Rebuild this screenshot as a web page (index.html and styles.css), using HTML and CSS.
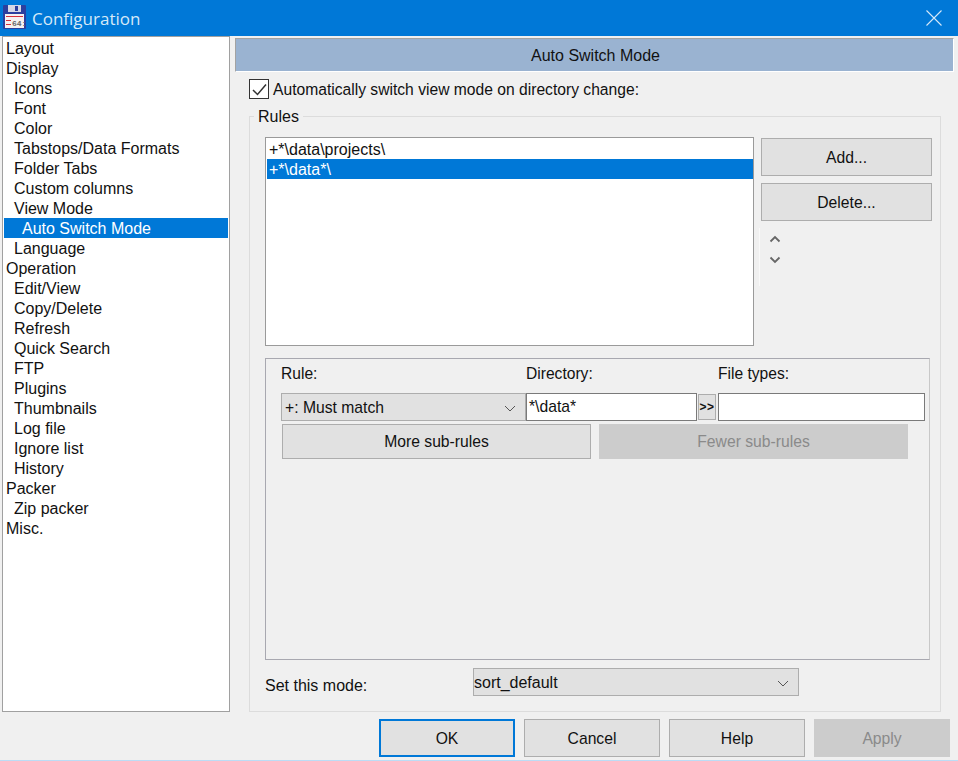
FILE: index.html
```html
<!DOCTYPE html>
<html lang="en">
<head>
<meta charset="utf-8">
<title>Configuration</title>
<link rel="stylesheet" href="styles.css">
</head>
<body>
<div class="dialog">
  <header class="titlebar">
    <svg class="app-icon" width="23" height="24" viewBox="0 0 23 24">
      <rect x="0" y="0" width="23" height="24" rx="1" fill="#2c3f9e"/>
      <rect x="5" y="0" width="13" height="7" fill="#d5d8e6"/>
      <rect x="12" y="1" width="3" height="5" fill="#2c3f9e"/>
      <rect x="2" y="9" width="19" height="14" fill="#f6f1f1"/>
      <rect x="3" y="11" width="17" height="1" fill="#d8313a"/>
      <rect x="3" y="15" width="5" height="1" fill="#d8313a"/>
      <rect x="3" y="19" width="5" height="1" fill="#d8313a"/>
      <text class="icon-text" x="9" y="21">64:</text>
    </svg>
    <span class="title">Configuration</span>
    <svg class="close" width="16" height="16" viewBox="0 0 16 16"><path d="M0.5 0.5L15.5 15.5M15.5 0.5L0.5 15.5" stroke="#d6e9f8" stroke-width="1.1" fill="none"/></svg>
  </header>
  <div class="body">
    <nav class="tree">
      <div class="node">Layout</div>
      <div class="node">Display</div>
      <div class="node l1">Icons</div>
      <div class="node l1">Font</div>
      <div class="node l1">Color</div>
      <div class="node l1">Tabstops/Data Formats</div>
      <div class="node l1">Folder Tabs</div>
      <div class="node l1">Custom columns</div>
      <div class="node l1">View Mode</div>
      <div class="node l2 selected">Auto Switch Mode</div>
      <div class="node l1">Language</div>
      <div class="node">Operation</div>
      <div class="node l1">Edit/View</div>
      <div class="node l1">Copy/Delete</div>
      <div class="node l1">Refresh</div>
      <div class="node l1">Quick Search</div>
      <div class="node l1">FTP</div>
      <div class="node l1">Plugins</div>
      <div class="node l1">Thumbnails</div>
      <div class="node l1">Log file</div>
      <div class="node l1">Ignore list</div>
      <div class="node l1">History</div>
      <div class="node">Packer</div>
      <div class="node l1">Zip packer</div>
      <div class="node">Misc.</div>
    </nav>
    <main class="panel">
      <div class="panel-head">Auto Switch Mode</div>
      <label class="auto-row">
        <span class="check"><svg width="15" height="13" viewBox="0 0 15 13"><path d="M1 7L5.5 11.5L14 1.5" stroke="#333" stroke-width="1.5" fill="none"/></svg></span>
        <span class="auto-text">Automatically switch view mode on directory change:</span>
      </label>
      <section class="rules">
        <span class="legend">Rules</span>
        <div class="rules-top">
          <div class="listbox">
            <div class="item">+*\data\projects\</div>
            <div class="item selected">+*\data*\</div>
          </div>
          <div class="side">
            <div class="btn side-btn">Add...</div>
            <div class="btn side-btn">Delete...</div>
            <div class="updown">
              <svg width="12" height="8" viewBox="0 0 12 8"><path d="M1.5 6.5L6 2L10.5 6.5" stroke="#666" stroke-width="1.8" fill="none"/></svg>
              <svg width="12" height="8" viewBox="0 0 12 8"><path d="M1.5 1.5L6 6L10.5 1.5" stroke="#666" stroke-width="1.8" fill="none"/></svg>
            </div>
          </div>
        </div>
        <div class="subbox">
          <div class="labels">
            <span class="lab-rule">Rule:</span>
            <span class="lab-dir">Directory:</span>
            <span>File types:</span>
          </div>
          <div class="inputs">
            <div class="combo rule-combo"><span>+: Must match</span><svg width="12" height="7" viewBox="0 0 12 7"><path d="M1 1L6 6L11 1" stroke="#555" stroke-width="1" fill="none"/></svg></div>
            <div class="field dir-field">*\data*</div>
            <div class="btn more">&gt;&gt;</div>
            <div class="field types-field"></div>
          </div>
          <div class="subrule-btns">
            <div class="btn sub-btn">More sub-rules</div>
            <div class="btn sub-btn disabled">Fewer sub-rules</div>
          </div>
        </div>
        <div class="mode-row">
          <span class="mode-label">Set this mode:</span>
          <div class="combo mode-combo"><span>sort_default</span><svg width="12" height="7" viewBox="0 0 12 7"><path d="M1 1L6 6L11 1" stroke="#555" stroke-width="1" fill="none"/></svg></div>
        </div>
      </section>
    </main>
  </div>
  <footer class="footer">
    <div class="btn foot-btn default">OK</div>
    <div class="btn foot-btn">Cancel</div>
    <div class="btn foot-btn">Help</div>
    <div class="btn foot-btn disabled">Apply</div>
  </footer>
</div>
</body>
</html>
```
FILE: styles.css
```css
* { box-sizing: border-box; }
html, body { margin: 0; padding: 0; }
body {
  width: 958px;
  height: 761px;
  overflow: hidden;
  background: #f0f0f0;
  color: #111;
  font-family: "Liberation Sans", Arial, sans-serif;
  font-size: 16px;
}
.dialog { display: flex; flex-direction: column; height: 761px; border-bottom: 1px solid #bcdcf5; }
.titlebar {
  height: 36px;
  flex: none;
  background: #0078d7;
  display: flex;
  align-items: center;
  padding: 0 16px 0 3px;
  color: #d6e9f8;
}
.app-icon { flex: none; margin-top: -2px; }
.icon-text { font-family: "Liberation Mono", monospace; font-size: 8px; font-weight: 700; fill: #666; }
.title { margin-left: 6px; font-size: 17px; font-family: "Open Sans", sans-serif; }
.close { margin-left: auto; margin-top: -1px; }
.body { display: flex; flex: none; height: 676px; }
.tree {
  width: 228px;
  margin-left: 2px;
  background: #fff;
  border: 1px solid #a0a0a0;
  padding: 1px;
  flex: none;
}
.node { height: 20px; line-height: 22px; padding-left: 2px; white-space: nowrap; }
.node.l1 { padding-left: 10px; }
.node.l2 { padding-left: 18px; }
.node.selected { background: #0078d7; color: #fff; }
.panel { margin-left: 5px; width: 719px; flex: none; display: flex; flex-direction: column; }
.panel-head {
  height: 34px;
  margin-top: 2px;
  background: #9ab3d1;
  border-top: 1px solid #a3a3a3;
  border-left: 1px solid #a3a3a3;
  border-bottom: 1px solid #fff;
  border-right: 1px solid #fff;
  text-align: center;
  line-height: 33px;
  padding-left: 2px;
}
.auto-row { display: flex; align-items: center; height: 22px; margin: 6px 0 0 14px; gap: 4px; }
.auto-text { font-size: 15.65px; padding-top: 2px; }
.check {
  width: 20px; height: 20px;
  background: #fff;
  border: 1px solid #333;
  display: flex; align-items: center; justify-content: center;
}
.rules {
  position: relative;
  margin: 16px 0 0 14px;
  width: 692px;
  height: 596px;
  border: 1px solid #dcdcdc;
  padding: 21px 0 0 15px;
}
.legend {
  position: absolute;
  top: -9px;
  left: 4px;
  background: #f0f0f0;
  padding: 0 4px;
  line-height: 18px;
}
.rules-top { display: flex; gap: 7px; height: 208px; }
.listbox {
  width: 489px;
  height: 209px;
  margin-top: -1px;
  background: #fff;
  border: 1px solid #9a9a9a;
  padding: 1px 0 0 1px;
}
.item { height: 20px; line-height: 22px; width: 486px; padding-left: 2px; }
.item.selected { background: #0078d7; color: #fff; }
.side { width: 171px; display: flex; flex-direction: column; }
.btn {
  background: #e1e1e1;
  border: 1px solid #adadad;
  display: flex; align-items: center; justify-content: center;
  font-size: 15.7px;
}
.btn.disabled { background: #cccccc; border-color: #cccccc; color: #8a8a8a; }
.side-btn { height: 38px; margin-bottom: 7px; padding-top: 2px; }
.updown {
  display: flex; flex-direction: column; gap: 13px;
  padding-left: 9px;
  padding-top: 7px;
  padding-bottom: 5px;
  margin-left: -2px;
  border-left: 1px solid #f9f9f9;
  height: 46px;
  box-sizing: content-box;
}
.subbox {
  margin-top: 12px;
  width: 665px;
  height: 302px;
  border: 1px solid #a8a8b0;
  border-right-color: #c8c8c8;
  padding-left: 15px;
}
.labels { display: flex; height: 34px; line-height: 30px; font-size: 15.6px; }
.lab-rule { width: 245px; }
.lab-dir { width: 192px; }
.inputs { display: flex; height: 28px; align-items: center; }
.combo {
  background: #e1e1e1;
  border: 1px solid #adadad;
  display: flex; align-items: center; justify-content: space-between;
  height: 28px;
  padding: 2px 9px 0 3px;
}
.rule-combo { width: 245px; font-size: 15.7px; }
.field { background: #fff; border: 1px solid #7a7a7a; height: 28px; line-height: 26px; padding-left: 2px; font-size: 15.7px; }
.dir-field { width: 171px; }
.btn.more { width: 18px; height: 26px; margin: 0 2px 0 1px; font-size: 12px; font-weight: 700; letter-spacing: 0.5px; }
.types-field { width: 207px; }
.subrule-btns { display: flex; gap: 8px; margin: 3px 0 0 1px; }
.sub-btn { width: 309px; height: 35px; }
.mode-row { display: flex; height: 28px; margin-top: 8px; }
.mode-label { width: 208px; line-height: 36px; }
.mode-combo { width: 326px; padding-left: 0; }
.footer { display: flex; justify-content: flex-end; gap: 9px; padding: 7px 8px 0 0; }
.foot-btn { width: 136px; height: 38px; padding-top: 2px; }
.btn.default { border: 2px solid #0078d7; }
```
